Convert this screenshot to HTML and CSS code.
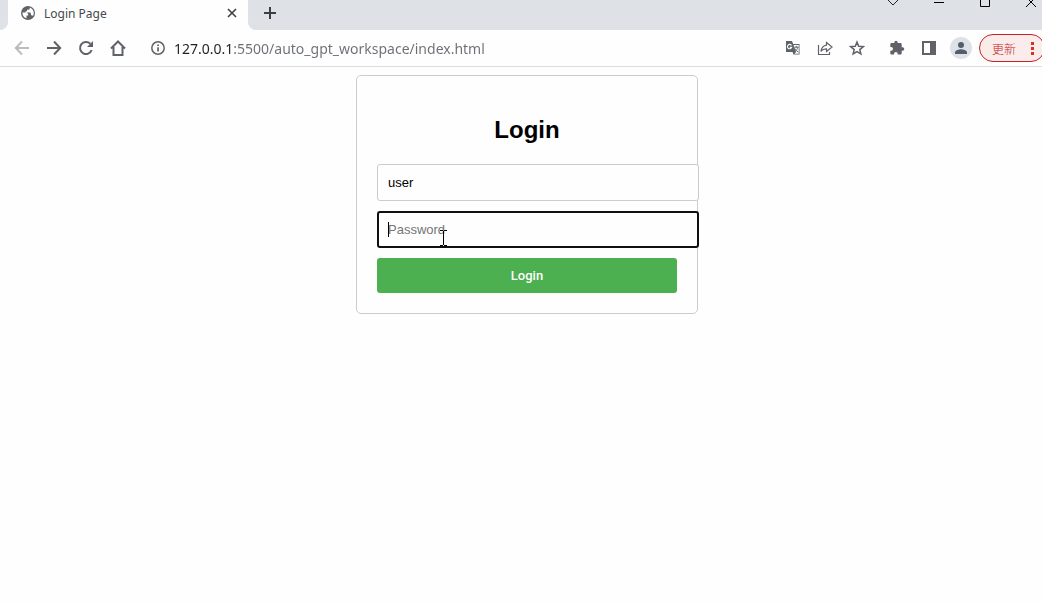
FILE: index.html
```html
<!doctype html>
<html lang="en">
<head>
<meta charset="utf-8">
<title>Login Page</title>
<link rel="stylesheet" href="styles.css">
</head>
<body>
<div class="window">
  <div class="tabstrip">
    <div class="strip-start"></div>
    <div class="tab">
      <svg class="favicon" width="16" height="16" viewBox="0 0 16 16">
        <circle cx="8" cy="8" r="7" fill="#5f6368"/>
        <path d="M2.400 7.500h3.600c1.400 0 2.200 1 2.200 2.200v.8h-1.700v2.800c-2.600-.700-4.300-3-4.100-5.800zM9.800 2.600v.7c0 .8-.6 1.400-1.400 1.400H7v1.500H5.600v1.200h4c.8 0 1.300.5 1.300 1.300v1.500h.9c.600 0 1 .3 1.200.7 1-1.700.9-4 .2-5.300C12.400 4.200 11.200 3 9.800 2.600z" fill="#fff"/>
      </svg>
      <span class="tab-title">Login Page</span>
      <button class="icon-small" aria-label="Close tab">
        <svg width="10" height="10" viewBox="0 0 10 10"><path d="M1 1l8 8M9 1L1 9" stroke="#3c4043" stroke-width="1.600"/></svg>
      </button>
    </div>
    <div class="strip-rest">
      <button class="new-tab" aria-label="New tab">
        <svg width="12" height="12" viewBox="0 0 12 12"><path d="M0 6h12M6 0v12" stroke="#3c4043" stroke-width="2"/></svg>
      </button>
      <div class="window-controls">
        <button aria-label="Search tabs"><svg width="46" height="8" viewBox="0 0 46 8"><path d="M18 0l5 5 5-5" fill="none" stroke="#222"/></svg></button>
        <button aria-label="Minimize"><svg width="46" height="8" viewBox="0 0 46 8"><path d="M18 2.500h10" stroke="#000"/></svg></button>
        <button aria-label="Maximize"><svg width="46" height="8" viewBox="0 0 46 8"><path d="M18.500 -3.500h9v10h-9z" fill="none" stroke="#000"/></svg></button>
        <button aria-label="Close"><svg width="46" height="8" viewBox="0 0 46 8"><path d="M18 7L28-3M18-3l10 10" stroke="#000"/></svg></button>
      </div>
    </div>
  </div>

  <div class="toolbar">
    <button class="tool disabled" aria-label="Back">
      <svg width="16" height="16" viewBox="0 0 16 16"><path d="M15 8H2M8 1.500L1.800 8 8 14.500" fill="none" stroke="currentColor" stroke-width="2"/></svg>
    </button>
    <button class="tool" aria-label="Forward">
      <svg width="16" height="16" viewBox="0 0 16 16"><path d="M1 8h13M8 1.500L14.200 8 8 14.500" fill="none" stroke="currentColor" stroke-width="2"/></svg>
    </button>
    <button class="tool" aria-label="Reload">
      <svg width="16" height="16" viewBox="0 0 16 16"><path d="M13.700 10A6 6 0 1 1 12.300 3.800" fill="none" stroke="currentColor" stroke-width="2"/><path d="M15 1v6H9z" fill="currentColor"/></svg>
    </button>
    <button class="tool" aria-label="Home">
      <svg width="16" height="16" viewBox="0 0 16 16"><path d="M1 8.500L8 1.500l7 7M3.500 7v8h9V7" fill="none" stroke="currentColor" stroke-width="2"/></svg>
    </button>
    <div class="address">
      <button class="tool" aria-label="Site information">
        <svg width="16" height="16" viewBox="0 0 16 16"><circle cx="8" cy="8" r="6.200" fill="none" stroke="currentColor" stroke-width="1.500"/><path d="M7.200 7.200h1.700v4.300H7.200zM7.200 4.400h1.700v1.700H7.200z" fill="currentColor"/></svg>
      </button>
      <input class="url" type="text" aria-label="Address" value="127.0.0.1:5500/auto_gpt_workspace/index.html">
      <button class="tool" aria-label="Translate">
        <svg width="16" height="16" viewBox="0 0 16 16">
          <path d="M1 1h6l1.200 3H14.500v10.500H8.500L7.500 12H1z" fill="#5f6368"/>
          <path d="M8.500 5h5.200v8.700H9.600L11 12z" fill="#fff"/>
          <path d="M6.500 5.400a2.200 2.200 0 1 0 .2 2H4.800" fill="none" stroke="#fff" stroke-width="1.100"/>
          <path d="M9.300 7.200h4.200M11.400 6v1.200M12.800 7.300c-.5 2-1.500 3.200-3 4.200M10 8.500c.7 1.500 1.600 2.500 3.200 3.500" fill="none" stroke="#5f6368"/>
        </svg>
      </button>
      <button class="tool" aria-label="Share">
        <svg width="16" height="16" viewBox="0 0 16 16"><path d="M1.500 5v9.500h11V12M9.500 2.500L15 7l-5.500 4.500V8.900C7 8.800 5.300 9.600 4 11.500 4.400 8 6.200 5.600 9.500 5.100z" fill="none" stroke="currentColor" stroke-width="1.200"/></svg>
      </button>
      <button class="tool" aria-label="Bookmark">
        <svg width="16" height="16" viewBox="0 0 16 16"><path d="M8 2l1.700 4.200 4.600.4-3.500 3 1.100 4.400L8 11.600 4.100 14l1.100-4.400-3.500-3 4.600-.4z" fill="none" stroke="currentColor" stroke-width="1.500"/></svg>
      </button>
    </div>
    <button class="tool" aria-label="Extensions">
      <svg width="16" height="16" viewBox="0 0 16 16"><path d="M13.600 7.300h-.9V4.400c0-.7-.6-1.300-1.300-1.300H8.700v-.7a1.700 1.700 0 0 0-3.400 0v.7H2.600c-.7 0-1.300.6-1.300 1.300v2.500h.8a1.900 1.900 0 0 1 0 3.800h-.8v2.600c0 .7.600 1.300 1.300 1.300h2.500v-.9a1.800 1.800 0 0 1 3.600 0v.9h2.700c.7 0 1.300-.6 1.300-1.300v-2.600h.9a1.700 1.700 0 0 0 0-3.400z" fill="currentColor"/></svg>
    </button>
    <button class="tool" aria-label="Side panel">
      <svg width="16" height="16" viewBox="0 0 16 16"><path d="M1 1h14v14H1zM3 3v10h6V3z" fill="currentColor" fill-rule="evenodd"/></svg>
    </button>
    <button class="tool" aria-label="Profile">
      <svg width="22" height="22" viewBox="0 0 22 22"><circle cx="11" cy="11" r="11" fill="#dee1e6"/><circle cx="11" cy="8" r="3" fill="#525d70"/><path d="M5 17v-1.700c0-2 4-3 6-3s6 1 6 3V17z" fill="#525d70"/></svg>
    </button>
    <button class="update">
      <span lang="zh">更新</span>
      <svg width="4" height="14" viewBox="0 0 4 14"><path d="M1 1h3v3H1zM1 6h3v3H1zM1 11h3v3H1z" fill="#d93025"/></svg>
    </button>
  </div>

  <main class="page">
    <form class="login">
      <h2>Login</h2>
      <input class="field" type="text" aria-label="Username" placeholder="Username" value="user">
      <div class="password">
        <input class="field active" type="password" aria-label="Password" placeholder="Password">
        <span class="caret"></span>
        <svg class="pointer" width="7" height="16" viewBox="0 0 7 16"><path d="M0 .5h3M4 .5h3M3.500 1v14M0 15.500h3M4 15.500h3" stroke="#000"/></svg>
      </div>
      <button class="submit" type="button">Login</button>
    </form>
  </main>
</div>
</body>
</html>
```

FILE: styles.css
```css
body {
    margin: 0;
    background: #fefefe;
    font-family: "Liberation Sans", Arial, sans-serif;
    overflow-x: hidden;
}
button {
    padding: 0;
    border: 0;
    background: none;
    font-family: inherit;
}
svg {
    display: block;
}
/* the window runs a little past the right edge of the screen */
.window {
    margin-right: -12px;
}

/* tabs */
.tabstrip {
    display: flex;
    height: 30px;
}
.strip-start {
    width: 8px;
    background: #dee1e6;
    border-bottom-right-radius: 8px;
}
.tab {
    display: flex;
    align-items: center;
    box-sizing: border-box;
    width: 240px;
    padding: 0 8px 4px 12px;
}
.tab-title {
    flex: 1;
    margin-left: 8px;
    font: 12px "Noto Sans", sans-serif;
    color: #45494d;
}
.icon-small {
    display: flex;
    align-items: center;
    justify-content: center;
    width: 16px;
    height: 16px;
}
.strip-rest {
    flex: 1;
    display: flex;
    justify-content: space-between;
    align-items: flex-start;
    background: #dee1e6;
    border-bottom-left-radius: 8px;
}
.new-tab {
    padding: 7px 16px;
}
.window-controls {
    display: flex;
}

/* toolbar */
.toolbar {
    display: flex;
    align-items: center;
    height: 36px;
    padding: 0 9px 0 6px;
    border-bottom: 1px solid #dadce0;
}
.tool {
    display: flex;
    align-items: center;
    justify-content: center;
    flex: none;
    width: 32px;
    height: 28px;
    color: #5f6368;
}
.tool.disabled {
    color: #babcbe;
}
.address {
    flex: 1;
    display: flex;
    align-items: center;
    margin: 0 8px;
}
.url {
    flex: 1;
    min-width: 0;
    padding: 0;
    border: 0;
    outline: 0;
    font: 14px "Noto Sans", sans-serif;
    /* host is dark, the rest of the url is grey */
    color: transparent;
    background: linear-gradient(90deg, #202124 59px, #6b6f74 59px);
    -webkit-background-clip: text;
    background-clip: text;
}
.update {
    display: flex;
    align-items: center;
    justify-content: space-between;
    box-sizing: border-box;
    width: 66px;
    height: 28px;
    margin-left: 2px;
    padding: 0 10px 0 12px;
    border: 1px solid #c5221f;
    border-radius: 14px;
    background: #faeceb;
    color: #c5221f;
    font: 300 12px "Noto Sans CJK SC", sans-serif;
}

/* login form */
.page {
    padding: 8px;
}
.login {
    width: 300px;
    margin: 0 auto;
    padding: 20px;
    border: 1px solid #ccc;
    border-radius: 5px;
}
.login h2 {
    margin: 20px 0;
    font-size: 24px;
    line-height: 28px;
    text-align: center;
}
/* fields are wider than the form by their padding */
.field {
    display: block;
    box-sizing: content-box;
    width: 100%;
    height: 15px;
    margin-bottom: 10px;
    padding: 10px;
    border: 1px solid #ccc;
    border-radius: 3px;
    background: #fefefe;
    color: #000;
    font: 13px "Liberation Sans", Arial, sans-serif;
}
.field::placeholder {
    color: #757575;
}
.field.active {
    padding: 9px;
    border: 2px solid #101010;
}
.password {
    position: relative;
}
.caret {
    position: absolute;
    left: 11px;
    top: 11px;
    width: 1px;
    height: 15px;
    background: #000;
}
.pointer {
    position: absolute;
    left: 63px;
    top: 19px;
}
.submit {
    display: block;
    width: 100%;
    height: 35px;
    border-radius: 3px;
    background: #4caf50;
    color: #fff;
    font: 500 13px Roboto, sans-serif;
}
```
